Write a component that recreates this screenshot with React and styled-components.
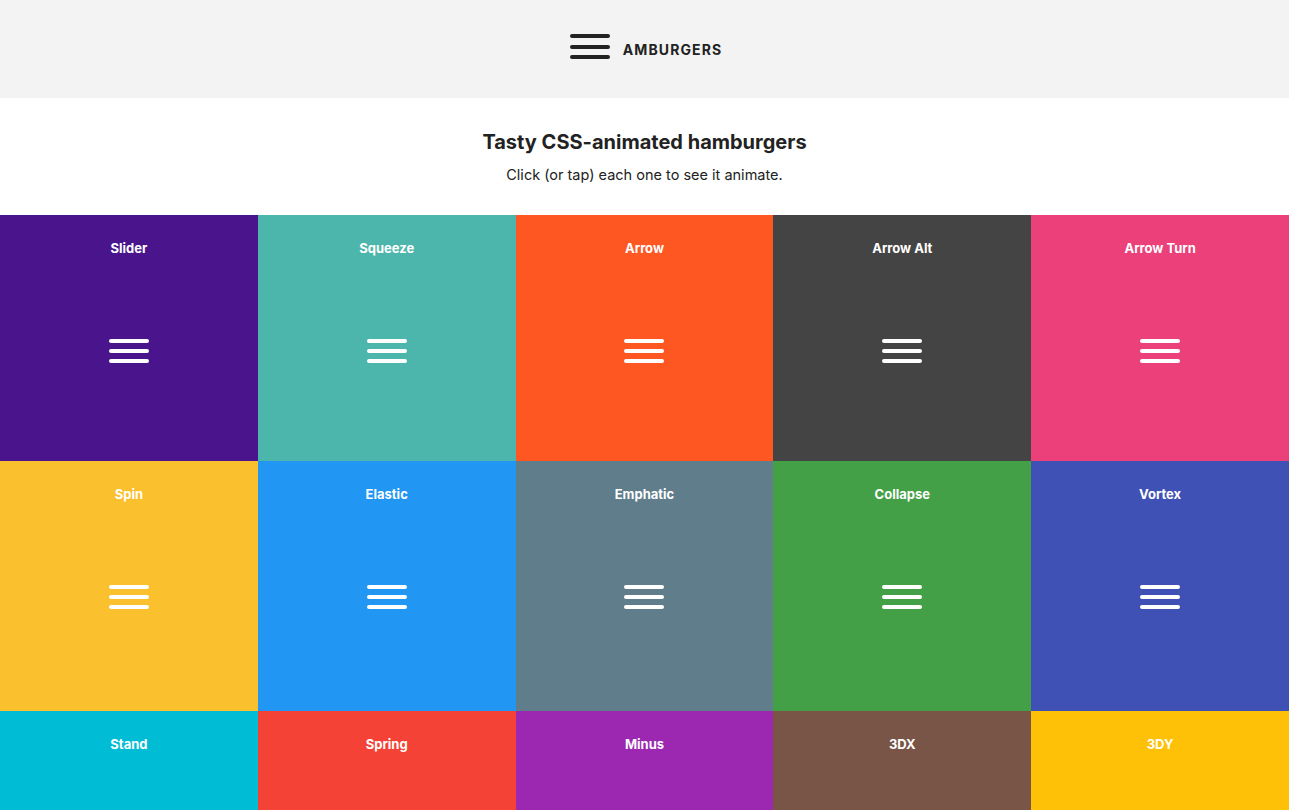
import React from "react";
import styled, { createGlobalStyle } from "styled-components";

const Global = createGlobalStyle`
  html, body { margin: 0; padding: 0; }
  body {
    font-family: Inter, "Helvetica Neue", Arial, sans-serif;
    color: #222;
    background: #fff;
    -webkit-font-smoothing: antialiased;
  }
`;

const Header = styled.header`
  height: 98px;
  background: #f3f3f3;
  display: flex;
  align-items: center;
  justify-content: center;
`;

const Logo = styled.div`
  display: flex;
  align-items: center;
  gap: 12px;
  padding-left: 2px;
`;

const LogoMark = styled.span`
  display: inline-flex;
  margin-bottom: 5px;
  margin-left: 1px;
`;

const LogoText = styled.span`
  font-weight: 700;
  font-size: 14px;
  letter-spacing: 1.1px;
  color: #222;
  line-height: 18px;
  margin-top: 2px;
  margin-left: 1px;
`;

const Burger = styled.span`
  display: inline-flex;
  flex-direction: column;
  gap: ${(p) => p.$gap}px;
  width: 40px;
`;

const Bar = styled.span`
  display: block;
  width: 40px;
  height: 4px;
  border-radius: 4px;
  background: ${(p) => p.$color};
`;

const Intro = styled.section`
  height: 117px;
  display: flex;
  flex-direction: column;
  align-items: center;
  box-sizing: border-box;
  padding-top: 30px;
`;

const Title = styled.h1`
  margin: 0;
  font-size: 20px;
  font-weight: 700;
  line-height: 28px;
  color: #222;
`;

const Subtitle = styled.p`
  margin: 9px 0 0;
  font-size: 14.5px;
  line-height: 20px;
  color: #222;
`;

const Grid = styled.div`
  display: grid;
  grid-template-columns: repeat(5, 1fr);
  grid-template-rows: 246px 250px 250px;
`;

const Tile = styled.div`
  background: ${(p) => p.$bg};
  display: flex;
  flex-direction: column;
  align-items: center;
  padding-top: 25px;
  box-sizing: border-box;
`;

const Label = styled.div`
  color: #fff;
  font-size: 13px;
  font-weight: 700;
  line-height: 16px;
`;

const TileBurger = styled.div`
  margin-top: 71px;
`;

const Hamburger = ({ color, gap }) => (
  <Burger $gap={gap}>
    <Bar $color={color} />
    <Bar $color={color} />
    <Bar $color={color} />
  </Burger>
);

const tiles = [
  ["Slider", "#4a148c"],
  ["Squeeze", "#4db6ac"],
  ["Arrow", "#ff5722"],
  ["Arrow Alt", "#444444"],
  ["Arrow Turn", "#ec407a"],
  ["Spin", "#fbc02d"],
  ["Elastic", "#2196f3"],
  ["Emphatic", "#607d8b"],
  ["Collapse", "#43a047"],
  ["Vortex", "#3f51b5"],
  ["Stand", "#00bcd4"],
  ["Spring", "#f44336"],
  ["Minus", "#9c27b0"],
  ["3DX", "#795548"],
  ["3DY", "#ffc107"],
];

export default function App() {
  return (
    <>
      <Global />
      <Header>
        <Logo>
          <LogoMark>
            <Hamburger color="#222" gap={6.5} />
          </LogoMark>
          <LogoText>AMBURGERS</LogoText>
        </Logo>
      </Header>
      <Intro>
        <Title>Tasty CSS-animated hamburgers</Title>
        <Subtitle>Click (or tap) each one to see it animate.</Subtitle>
      </Intro>
      <Grid>
        {tiles.map(([name, bg]) => (
          <Tile key={name} $bg={bg}>
            <Label>{name}</Label>
            <TileBurger>
              <Hamburger color="#fff" gap={6} />
            </TileBurger>
          </Tile>
        ))}
      </Grid>
    </>
  );
}
